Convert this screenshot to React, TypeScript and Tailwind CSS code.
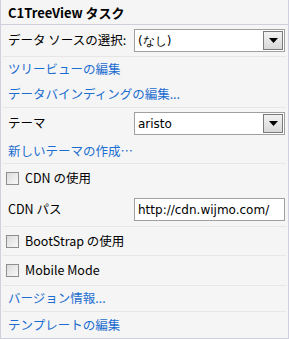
import React from "react";

const font = { fontFamily: '"Noto Sans CJK JP", "Noto Sans", sans-serif' };

function DropBtn() {
  return (
    <div className="absolute right-[1px] top-[1px] bottom-[1px] w-[20px] border border-[#7a7a7a] bg-gradient-to-b from-[#f2f2f2] to-[#d8d8d8] flex items-center justify-center">
      <svg width="9" height="5" viewBox="0 0 9 5"><path d="M0 0h9L4.5 5z" fill="#000" /></svg>
    </div>
  );
}

function Select({ value }: { value: string }) {
  return (
    <div className="relative w-[151px] h-[23px] border border-[#a0a0a0] bg-white flex items-center pl-[3px] text-black">
      <span className="font-['DejaVu_Sans'] text-[12px]">{value}</span>
      <DropBtn />
    </div>
  );
}

function Check() {
  return (
    <div className="w-[13px] h-[13px] border border-[#8e8e8e] bg-gradient-to-br from-[#dcdcdc] to-[#f8f8f8] shrink-0" />
  );
}

const Link = ({ children }: { children: React.ReactNode }) => (
  <span className="text-[#1c6dd0]">{children}</span>
);

export default function App() {
  return (
    <div style={font} className="w-[289px] h-[339px] bg-[#f5f5f5] border border-t-0 border-[#cfcfe0] text-[12.5px] text-black leading-none">
      <div className="h-[25px] border-b border-[#cfcfe0] flex items-center pl-[7px] font-bold text-[13px]">C1TreeView タスク</div>
      <div className="mx-[2px] flex flex-col">
        <div className="h-[32px] border-b border-[#e6e6e6] flex items-center justify-between pl-[5px] pr-[1px]">
          <span>データ ソースの選択:</span>
          <Select value="(なし)" />
        </div>
        <div className="h-[25px] flex items-center pl-[5px]"><Link>ツリービューの編集</Link></div>
        <div className="h-[26px] border-b border-[#e6e6e6] flex items-center pl-[5px]"><Link>データバインディングの編集...</Link></div>
        <div className="h-[31px] flex items-center justify-between pl-[5px] pr-[1px]">
          <span>テーマ</span>
          <Select value="aristo" />
        </div>
        <div className="h-[25px] border-b border-[#e6e6e6] flex items-center pl-[5px]"><Link>新しいテーマの作成…</Link></div>
        <div className="h-[29px] flex items-center gap-[6px] pl-[3px]">
          <Check />
          <span>CDN の使用</span>
        </div>
        <div className="h-[34px] border-b border-[#e6e6e6] flex items-center justify-between pl-[5px] pr-[1px]">
          <span>CDN パス</span>
          <div className="w-[151px] h-[23px] border border-[#a0a0a0] bg-white flex items-center pl-[3px]">
            <span className="font-['DejaVu_Sans'] text-[12px]">http://cdn.wijmo.com/</span>
          </div>
        </div>
        <div className="h-[29px] border-b border-[#e6e6e6] flex items-center gap-[6px] pl-[3px]">
          <Check />
          <span>BootStrap の使用</span>
        </div>
        <div className="h-[30px] border-b border-[#e6e6e6] flex items-center gap-[6px] pl-[3px]">
          <Check />
          <span>Mobile Mode</span>
        </div>
        <div className="h-[26px] border-b border-[#e6e6e6] flex items-center pl-[5px]"><Link>バージョン情報...</Link></div>
        <div className="h-[26px] flex items-center pl-[5px]"><Link>テンプレートの編集</Link></div>
      </div>
    </div>
  );
}
